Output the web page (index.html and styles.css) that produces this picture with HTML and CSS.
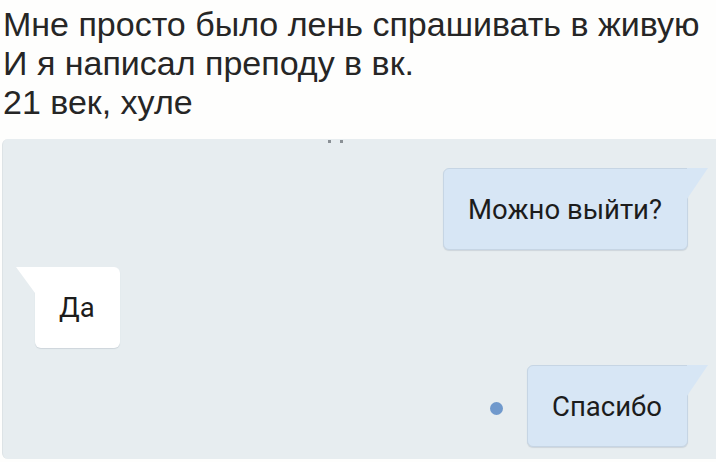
FILE: index.html
```html
<!DOCTYPE html>
<html lang="ru">
<head>
  <meta charset="UTF-8">
  <title>Преподу в вк</title>
  <link rel="stylesheet" href="styles.css">
</head>
<body>

  <div class="post-text">
    <p>Мне просто было лень спрашивать в живую</p>
    <p>И я написал преподу в вк.</p>
    <p>21 век, хуле</p>
  </div>

  <div class="chat">
    <div class="chat-top">
      <span class="tiny-dot"></span>
      <span class="tiny-dot"></span>
    </div>

    <div class="msg-row out first">
      <div class="bubble out">Можно выйти?</div>
    </div>

    <div class="msg-row in">
      <div class="bubble in">Да</div>
    </div>

    <div class="msg-row out">
      <span class="unread-dot"></span>
      <div class="bubble out">Спасибо</div>
    </div>
  </div>

</body>
</html>
```

FILE: styles.css
```css
html, body {
  margin: 0;
  padding: 0;
  background-color: #fefefd;
  overflow: hidden;
}
body {
  font-family: "Liberation Sans", Arial, sans-serif;
  color: #222;
  width: 716px;
  height: 462px;
}
.post-text {
  padding: 5px 0 0 3px;
  height: 139px;
  box-sizing: border-box;
}
.post-text p {
  margin: 0;
  font-size: 34px;
  line-height: 39px;
  color: #262626;
}
.chat {
  margin-left: 2px;
  height: 320px;
  background-color: #e7edf0;
  border-top-left-radius: 6px;
  border-bottom-left-radius: 6px;
  border-left: 1px solid #dde3e6;
  box-sizing: border-box;
  padding: 0 28px 0 32px;
}
.chat-top {
  display: flex;
  gap: 9px;
  padding-left: 293px;
  height: 4px;
  align-items: flex-end;
}
.tiny-dot {
  width: 3px;
  height: 3px;
  background-color: #8a9095;
}
.msg-row {
  display: flex;
  align-items: center;
  margin-top: 17px;
}
.msg-row.first {
  margin-top: 25px;
}
.msg-row.out {
  justify-content: flex-end;
}
.bubble {
  position: relative;
  height: 82px;
  box-sizing: border-box;
  padding: 0 25px 0 24px;
  display: flex;
  align-items: center;
  font-family: Roboto, "Liberation Sans", sans-serif;
  font-size: 27.5px;
  color: #1c1c1c;
  border-radius: 6px;
}
.bubble.out {
  background-color: #d7e6f5;
  border: 1px solid #c6d5e4;
  border-top-right-radius: 0;
  box-shadow: 0 1px 1px rgba(60, 80, 100, 0.15);
}
.bubble.out::after {
  content: "";
  position: absolute;
  top: -1px;
  right: -21px;
  width: 21px;
  height: 31px;
  background-color: #d7e6f5;
  clip-path: polygon(0 0, 100% 0, 0 100%);
}
.bubble.in {
  background-color: #ffffff;
  border-top-left-radius: 0;
  box-shadow: 0 1px 1px rgba(60, 80, 100, 0.15);
  height: 81px;
}
.bubble.in::before {
  content: "";
  position: absolute;
  top: 0;
  left: -19px;
  width: 19px;
  height: 26px;
  background-color: #ffffff;
  clip-path: polygon(0 0, 100% 0, 100% 100%);
}
.unread-dot {
  width: 13px;
  height: 13px;
  border-radius: 50%;
  background-color: #7099cc;
  margin-right: 24px;
  margin-top: 4px;
}
```
